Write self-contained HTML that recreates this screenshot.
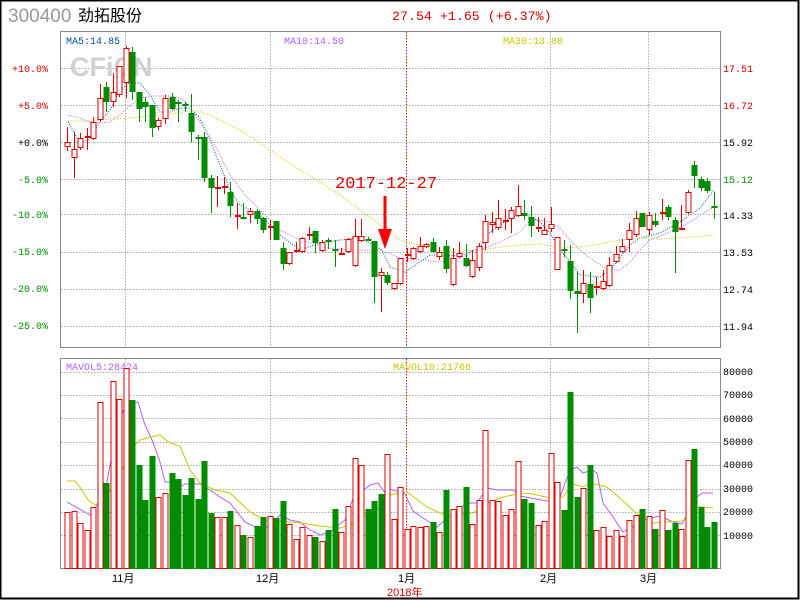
<!DOCTYPE html>
<html><head><meta charset="utf-8"><style>
html,body{margin:0;padding:0;background:#fff}
#w{position:relative;width:800px;height:600px;overflow:hidden;background:#fff}
svg{position:absolute;left:0;top:0}
</style></head><body><div id="w">
<svg id="s" width="800" height="600" xmlns="http://www.w3.org/2000/svg" font-family="Liberation Mono, monospace">
<rect x="0.5" y="0.5" width="798" height="598" fill="none" stroke="#000" stroke-width="2"/>
<text x="8" y="22" font-family="Liberation Sans, sans-serif" font-size="19" fill="#999">300400</text>
<text x="78" y="21" font-family="Liberation Sans, 'Noto Sans CJK SC', sans-serif" font-size="16" fill="#000">劲拓股份</text>
<text x="392" y="20" font-size="13.3" fill="#d00000">27.54 +1.65 (+6.37%)</text>
<g id="grid" stroke="#aaa" stroke-dasharray="1.5,1.5" stroke-width="1"></g>
<text x="70" y="76" font-family="Liberation Sans, sans-serif" font-weight="bold" font-size="27" fill="#d0d0d0">CFiCN</text>
<rect x="60.5" y="31.5" width="660" height="316" fill="none" stroke="#888"/>
<rect x="60.5" y="358.5" width="660" height="210" fill="none" stroke="#888"/>
<g font-size="10" text-anchor="end">
<text x="48" y="72" fill="#d00000">+10.0%</text>
<text x="48" y="109" fill="#d00000">+5.0%</text>
<text x="48" y="146" fill="#000">+0.0%</text>
<text x="48" y="183" fill="#008c00">-5.0%</text>
<text x="48" y="218" fill="#008c00">-10.0%</text>
<text x="48" y="255" fill="#008c00">-15.0%</text>
<text x="48" y="292" fill="#008c00">-20.0%</text>
<text x="48" y="329" fill="#008c00">-25.0%</text>
</g>
<g font-size="10">
<text x="723" y="72" fill="#d00000">17.51</text>
<text x="723" y="109" fill="#d00000">16.72</text>
<text x="723" y="146" fill="#000">15.92</text>
<text x="723" y="183" fill="#008c00">15.12</text>
<text x="723" y="219" fill="#000">14.33</text>
<text x="723" y="256" fill="#000">13.53</text>
<text x="723" y="293" fill="#000">12.74</text>
<text x="723" y="330" fill="#000">11.94</text>
<text x="723" y="375" fill="#000">80000</text>
<text x="723" y="398" fill="#000">70000</text>
<text x="723" y="422" fill="#000">60000</text>
<text x="723" y="445" fill="#000">50000</text>
<text x="723" y="468" fill="#000">40000</text>
<text x="723" y="492" fill="#000">30000</text>
<text x="723" y="515" fill="#000">20000</text>
<text x="723" y="539" fill="#000">10000</text>
<text x="66" y="44" fill="#00509c">MA5:14.85</text>
<text x="284" y="44" fill="#b060ff">MA10:14.50</text>
<text x="503" y="44" fill="#c8c800">MA30:13.88</text>
<text x="66" y="370" fill="#b060ff">MAVOL5:28424</text>
<text x="393" y="370" fill="#c8c800">MAVOL10:21766</text>
</g>
<g font-family="Liberation Sans, 'Noto Sans CJK SC', sans-serif" font-size="11" fill="#000">
<text x="112" y="582">11月</text>
<text x="256" y="582">12月</text>
<text x="398" y="582">1月</text>
<text x="540" y="582">2月</text>
<text x="640" y="582">3月</text>
<text x="387" y="596" fill="#d00000">2018年</text>
</g>
<g id="ma"></g>
<g id="c"></g>
<text x="335" y="188" font-size="17" fill="#e00000">2017-12-27</text>
<line x1="385" y1="196" x2="385" y2="236" stroke="#f00" stroke-width="3"/>
<polygon points="378,229 392,229 385,249" fill="#f00"/>
</svg>
<script>
var R='#e00000',G='#008c00',s=document.getElementById('s');
function el(t,a,p){var e=document.createElementNS('http://www.w3.org/2000/svg',t);for(var k in a)e.setAttribute(k,a[k]);(p||s).appendChild(e);return e;}
var g=document.getElementById('grid');
[68,105,142,179,214,252,289,326].forEach(function(y){el('line',{x1:61,x2:720,y1:y+.5,y2:y+.5},g)});
[372,395,418,442,465,489,512,535].forEach(function(y){el('line',{x1:61,x2:720,y1:y+.5,y2:y+.5},g)});
[125,270,550,648].forEach(function(x){el('line',{x1:x+.5,x2:x+.5,y1:32,y2:347},g);el('line',{x1:x+.5,x2:x+.5,y1:359,y2:568},g)});
el('line',{x1:406.5,x2:406.5,y1:32,y2:347,stroke:'#f00'},g);el('line',{x1:406.5,x2:406.5,y1:359,y2:568,stroke:'#f00'},g);
var C=[['R',142,147,127,151],['R',149,158,132,178],['R',138,148,133,150],['R',136,137,128,150],['R',122,139,117,140],['R',98,120,84,122],['G',87,102,82,112],['R',92,102,73,107],['R',66,95,66,97],['R',48,83,46,98],
['G',52,92,47,100],['G',92,109,92,122],['G',102,107,97,122],['G',105,128,105,137],['R',120,127,118,130],['R',98,119,95,124],['G',97,109,93,110],['G',102,104,100,122],['G',104,105,102,112],['G',113,132,94,142],
['G',137,138,135,160],['G',137,178,132,182],['G',178,188,175,213],['R',187,188,176,207],['R',186,187,177,194],['G',192,206,182,217],['R',215,216,203,229],['G',217,218,203,219],['R',211,215,208,223],['G',211,219,209,224],
['G',218,230,217,233],['R',226,227,220,240],['G',221,240,221,240],['G',248,264,242,270],['R',252,264,252,265],['R',250,251,242,253],['R',238,252,237,253],['R',234,235,227,240],['G',231,243,231,253],['R',242,251,240,252],
['G',240,242,238,249],['G',249,250,240,267],['R',253,254,248,255],['R',239,252,238,253],['R',236,266,219,267],['R',236,241,219,242],['G',239,240,237,241],['G',241,277,241,303],['R',272,276,268,312],['G',275,283,272,285],
['R',283,289,283,290],['R',258,284,258,285],['R',254,256,248,262],['R',248,259,247,260],['R',246,252,237,253],['R',244,247,243,248],['G',242,252,238,253],['R',252,257,247,260],['G',246,269,240,273],['R',258,285,248,286],
['R',253,257,242,258],['G',258,266,244,267],['R',260,277,250,278],['R',246,268,243,271],['R',221,243,215,250],['R',222,225,212,233],['R',218,228,200,230],['R',220,221,209,230],['R',210,219,207,233],['R',206,216,185,217],
['G',213,216,200,220],['G',217,226,206,237],['R',227,228,217,232],['R',230,235,218,235],['R',224,229,207,232],['R',237,270,237,270],['G',249,250,240,257],['G',261,291,245,299],['G',291,294,272,333],['R',283,294,270,303],
['G',284,298,272,313],['R',286,287,277,295],['R',281,289,270,290],['R',265,286,257,287],['R',254,262,246,263],['R',246,252,239,253],['R',230,240,223,252],['R',218,235,211,237],['G',213,227,213,227],['R',215,230,212,235],
['G',221,225,213,227],['R',212,213,199,220],['G',207,217,205,220],['G',220,232,217,273],['R',228,229,205,229],['R',192,213,190,214],['G',165,176,161,188],['G',179,188,177,191],['G',181,191,178,193],['G',206,207,192,219]];
var V='R512R511R523R530R507R402G483R381R399R368G400G465G500G456R497R493G473G479G495G478G499G461G513R517R517G511R525G535R537G526G517R516G518G501R524R539R527R535G537R541G530G509R532R506R458R465G509G501G494R454R519R487R529R526R527R526G522R532G490R509R506G487R524R500R430R500R501R515R509R461G499G503R525R521R453R482G510G392G497R488G465R530R527R536R530R536R520R515G509R516G529R510G530G523R529R460G449G507G527G522'.match(/[RG]\d+/g);
var cg=document.getElementById('c');
for(var i=0;i<100;i++){var x=Math.round(67+6.535*i);var c=C[i],col=c[0]=='R'?R:G;
 var bt=c[1],bb=Math.max(c[2],c[1]+1);
 if(c[0]=='R'){el('line',{x1:x+.5,x2:x+.5,y1:c[3],y2:bt,stroke:col},cg);el('line',{x1:x+.5,x2:x+.5,y1:bb,y2:c[4],stroke:col},cg);
  if(bb-bt<=2)el('rect',{x:x-2,y:bt,width:6,height:2,fill:col},cg);else el('rect',{x:x-2,y:bt+.5,width:5,height:bb-bt-1,fill:'#fff',stroke:col},cg);}
 else{el('line',{x1:x+.5,x2:x+.5,y1:c[3],y2:c[4],stroke:col},cg);el('rect',{x:x-2.5,y:bt,width:6,height:Math.max(2,bb-bt),fill:col},cg);}
 var v=V[i],vy=+v.slice(1);
 if(v[0]=='R')el('rect',{x:x-2,y:vy+.5,width:5,height:568-vy,fill:'#fff',stroke:R},cg);else el('rect',{x:x-2.5,y:vy,width:6,height:569-vy,fill:G},cg);}
var mg=document.getElementById('ma');
function pl(p,c,d){el('polyline',{points:p,fill:'none',stroke:c,'stroke-width':1,'stroke-dasharray':d||'none'},mg);}
pl('68,122 80,143 88,140 100,122 110,110 120,90 130,82 140,83 150,95 160,112 170,112 180,108 190,108 200,118 210,140 220,165 230,190 240,205 260,215 280,235 300,250 320,243 340,240 360,238 382,250 390,267 405,272 420,262 430,255 440,255 460,256 480,248 490,232 500,225 510,218 520,215 530,216 540,222 550,233 560,250 570,262 580,275 600,277 610,270 620,258 630,245 640,238 660,233 680,222 700,208 714,190','#00509c','1,1.5');
pl('68,115 80,118 90,122 100,123 110,122 120,115 130,106 140,98 150,96 170,96 180,98 190,106 200,122 215,145 230,175 245,195 260,210 280,230 300,240 330,248 350,250 380,250 400,258 420,260 440,262 460,258 480,250 500,242 520,232 530,220 540,220 550,222 560,228 570,240 580,250 590,258 600,265 610,270 620,270 630,262 640,250 650,240 670,232 690,222 700,215 714,207','#b060ff','1,1.5');
pl('68,121 90,121 110,119 130,118 150,116 170,114 190,111 200,112 210,115 220,120 240,130 260,143 280,157 300,170 320,182 340,195 360,210 380,225 400,240 420,245 440,250 460,251 480,250 500,247 520,245 540,244 560,248 580,247 600,244 620,240 640,238 660,239 690,237 714,235','#c8c800','1,1.5');
pl('67,502 90,515 95,508 105,493 110,465 120,420 125,406 138,402 145,425 152,440 160,462 165,482 172,482 178,488 185,484 200,484 210,490 220,497 230,503 245,522 255,527 270,527 280,515 290,520 300,522 310,530 320,535 330,532 345,520 355,493 360,493 370,485 378,483 385,493 390,489 405,494 413,511 423,518 437,527 448,517 467,503 477,503 487,488 497,490 513,490 520,496 547,501 560,497 570,470 577,467 583,473 592,470 597,473 603,503 613,517 623,532 637,525 647,519 660,516 673,522 682,524 690,510 697,497 702,493 713,493','#b060ff');
pl('67,481 75,481 80,487 88,500 95,505 105,498 118,480 130,450 140,440 150,437 160,435 170,443 180,446 190,470 200,483 215,490 230,493 250,512 265,520 280,521 300,523 320,526 340,528 350,525 360,518 375,512 390,495 407,492 427,507 447,516 473,513 487,503 503,497 522,493 533,494 550,498 563,497 573,484 583,487 590,483 607,487 623,501 637,514 653,523 667,522 683,521 693,507 702,507 713,508','#c8c800');
</script>
</div></body></html>
